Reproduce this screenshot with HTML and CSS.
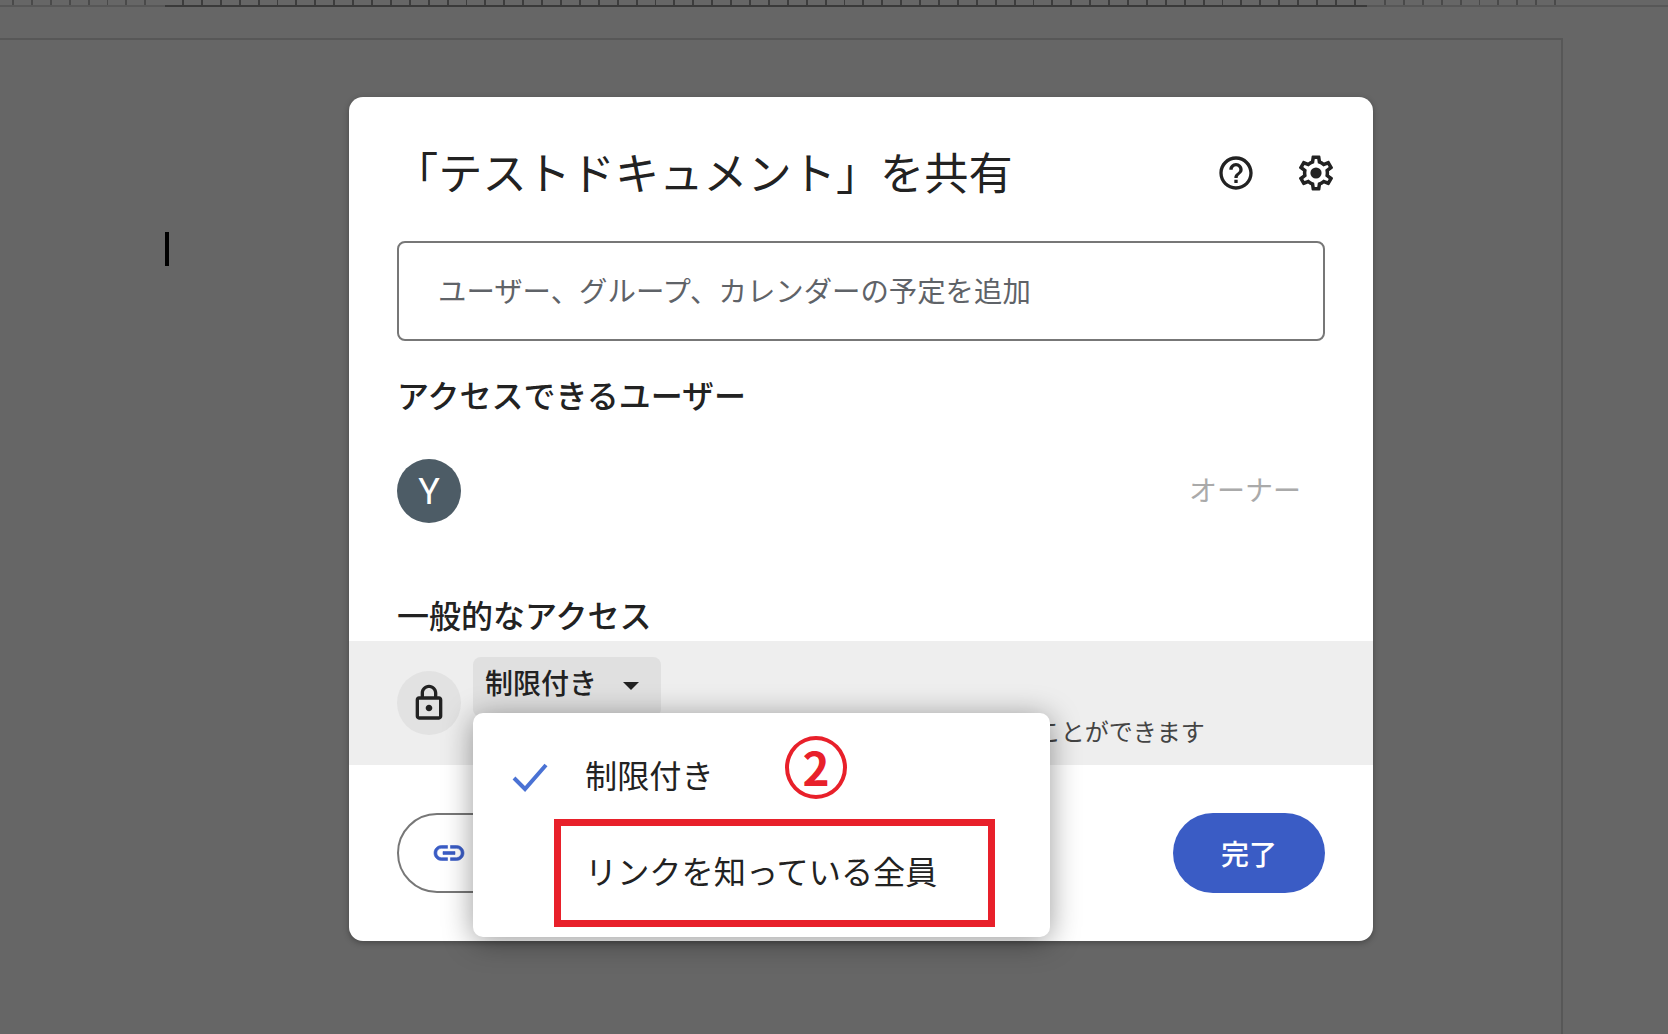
FILE: index.html
```html
<!DOCTYPE html>
<html lang="ja">
<head>
<meta charset="UTF-8">
<title>共有</title>
<link rel="stylesheet" href="styles.css">
</head>
<body>

<div class="ruler">
  <div class="ruler-side ruler-left"></div>
  <div class="ruler-main"></div>
  <div class="ruler-side ruler-right"></div>
</div>

<div class="page">
  <div class="caret"></div>
</div>

<div class="dialog">

  <div class="header">
    <h1 class="title">「テストドキュメント」を共有</h1>
    <svg class="head-icon" viewBox="0 0 24 24"><path d="M11 18h2v-2h-2v2zm1-16C6.48 2 2 6.48 2 12s4.48 10 10 10 10-4.48 10-10S17.52 2 12 2zm0 18c-4.41 0-8-3.59-8-8s3.59-8 8-8 8 3.59 8 8-3.59 8-8 8zm0-14c-2.21 0-4 1.79-4 4h2c0-1.1.9-2 2-2s2 .9 2 2c0 2-3 1.75-3 5h2c0-2.25 3-2.5 3-5 0-2.21-1.79-4-4-4z"/></svg>
    <svg class="head-icon gear" viewBox="0 0 24 24"><path d="M19.43 12.98c.04-.32.07-.64.07-.98s-.03-.66-.07-.98l2.11-1.65c.19-.15.24-.42.12-.64l-2-3.46c-.12-.22-.39-.3-.61-.22l-2.49 1c-.52-.4-1.08-.73-1.69-.98l-.38-2.65C14.46 2.18 14.25 2 14 2h-4c-.25 0-.46.18-.49.42l-.38 2.65c-.61.25-1.17.59-1.69.98l-2.49-1c-.23-.09-.49 0-.61.22l-2 3.46c-.13.22-.07.49.12.64l2.11 1.65c-.04.32-.07.65-.07.98s.03.66.07.98l-2.11 1.65c-.19.15-.24.42-.12.64l2 3.46c.12.22.39.3.61.22l2.49-1c.52.4 1.08.73 1.69.98l.38 2.65c.03.24.24.42.49.42h4c.25 0 .46-.18.49-.42l.38-2.65c.61-.25 1.17-.59 1.69-.98l2.49 1c.23.09.49 0 .61-.22l2-3.46c.12-.22.07-.49-.12-.64l-2.11-1.65zM17.45 11.27c.04.31.05.52.05.73s-.02.43-.05.73l-.14 1.13.89.7 1.08.84-.7 1.21-1.27-.51-1.04-.42-.9.68c-.43.32-.84.56-1.25.73l-1.06.43-.16 1.13-.2 1.35h-1.4l-.19-1.35-.16-1.13-1.06-.43c-.43-.18-.83-.41-1.23-.71l-.91-.7-1.06.43-1.27.51-.7-1.21 1.08-.84.89-.7-.14-1.13c-.03-.31-.05-.54-.05-.74s.02-.43.05-.73l.14-1.13-.89-.7-1.08-.84.7-1.21 1.27.51 1.04.42.9-.68c.43-.32.84-.56 1.25-.73l1.06-.43.16-1.13.2-1.35h1.39l.19 1.35.16 1.13 1.06.43c.43.18.83.41 1.23.71l.91.7 1.06-.43 1.27-.51.7 1.21-1.07.85-.89.7.14 1.13z"/><circle cx="12" cy="12" r="3.2"/></svg>
  </div>

  <div class="add-box">ユーザー、グループ、カレンダーの予定を追加</div>

  <h2 class="section-title">アクセスできるユーザー</h2>

  <div class="owner-row">
    <div class="avatar">Y</div>
    <div class="owner-label">オーナー</div>
  </div>

  <h2 class="section-title general-title">一般的なアクセス</h2>

  <div class="access-band">
    <div class="lock-circle">
      <svg viewBox="0 0 24 24"><path d="M12 17c1.1 0 2-.9 2-2s-.9-2-2-2-2 .9-2 2 .9 2 2 2zm6-9h-1V6c0-2.76-2.24-5-5-5S7 3.24 7 6v2H6c-1.1 0-2 .9-2 2v10c0 1.1.9 2 2 2h12c1.1 0 2-.9 2-2V10c0-1.1-.9-2-2-2zM9 6c0-1.66 1.34-3 3-3s3 1.34 3 3v2H9V6zm9 14H6V10h12v10z"/></svg>
    </div>
    <div class="access-info">
      <div class="access-select"><span class="select-text">制限付き</span><span class="arrow"></span></div>
      <div class="access-desc">アクセス権のあるユーザーのみが、リンクから開くことができます</div>
    </div>
  </div>

  <div class="footer">
    <div class="copy-btn">
      <svg viewBox="0 0 24 24"><path d="M3.9 12c0-1.71 1.39-3.1 3.1-3.1h4V7H7c-2.76 0-5 2.24-5 5s2.24 5 5 5h4v-1.9H7c-1.71 0-3.1-1.39-3.1-3.1zM8 13h8v-2H8v2zm9-6h-4v1.9h4c1.71 0 3.1 1.39 3.1 3.1s-1.39 3.1-3.1 3.1h-4V17h4c2.76 0 5-2.24 5-5s-2.24-5-5-5z"/></svg>
    </div>
    <div class="done-btn">完了</div>
  </div>

  <!-- popup over the band and footer -->
  <div class="menu">
    <div class="menu-item item-first">
      <svg class="check" viewBox="0 0 36 30"><path d="M2 16l11 11L34 3" fill="none" stroke="#4a72d4" stroke-width="4"/></svg>
      制限付き
    </div>
    <div class="menu-item">リンクを知っている全員</div>
    <div class="mark-box"></div>
    <div class="mark-num">2</div>
  </div>

</div>

</body>
</html>
```

FILE: styles.css
```css
*{
    box-sizing:border-box;
}

html,body{
    height:100%;
}

body{
    margin:0;
    background:#666;
    overflow:hidden;
    font-family:"Noto Sans CJK JP","Noto Sans",sans-serif;
    color:#222;
}

/* ruler */
.ruler{
    display:flex;
    height:7px;
}

.ruler-side,.ruler-main{
    border-bottom:2px solid #575757;
    background:repeating-linear-gradient(90deg,transparent 0,transparent 17px,#4a4a4a 17px,#4a4a4a 18.9px);
}

.ruler-left{
    width:165px;
    background-position:-5px 0;
}

.ruler-main{
    width:1202px;
    border-bottom-color:#3a3a3a;
    background:repeating-linear-gradient(90deg,transparent 0,transparent 17px,#3d3d3d 17px,#3d3d3d 18.9px);
}

.ruler-right{
    flex:1;
    background:linear-gradient(90deg,transparent 195px,#666 195px),repeating-linear-gradient(90deg,transparent 0,transparent 17px,#4a4a4a 17px,#4a4a4a 18.9px);
}

/* document behind the dialog */
.page{
    width:1563px;
    height:1000px;
    margin-top:31px;
    padding:192px 0 0 165px;
    border-top:2px solid #575757;
    border-right:2px solid #575757;
}

.caret{
    width:4px;
    height:34px;
    background:#000;
}

/* dialog */
.dialog{
    position:absolute;
    left:349px;
    top:97px;
    width:1024px;
    height:844px;
    padding:0 48px;
    background:#fff;
    border-radius:14px;
    box-shadow:0 2px 6px rgba(0,0,0,0.3);
}

.header{
    display:flex;
    align-items:center;
    height:144px;
    padding-top:7px;
}

.title{
    flex:1;
    margin:-4px 0 0 -3px;
    font-size:44.2px;
    font-weight:400;
    line-height:60px;
    color:#222;
}

.head-icon{
    width:40px;
    height:40px;
    fill:#222;
    margin-left:40px;
}

.gear{
    width:42px;
    height:42px;
    margin-left:39px;
    margin-right:-12px;
}

.add-box{
    height:100px;
    padding-left:39px;
    border:2px solid #777;
    border-radius:8px;
    font-size:28.4px;
    line-height:94px;
    color:#5f6368;
}

.section-title{
    height:106px;
    margin:0;
    font-size:32px;
    font-weight:500;
    line-height:106px;
    color:#222;
}

.owner-row{
    display:flex;
    align-items:center;
    justify-content:space-between;
    height:64px;
    margin-top:12px;
    padding-right:24px;
}

.avatar{
    width:64px;
    height:64px;
    border-radius:50%;
    background:#4d5c66;
    color:#fff;
    font-family:Roboto,sans-serif;
    font-size:36px;
    line-height:67px;
    text-align:center;
}

.owner-label{
    font-size:28px;
    line-height:40px;
    margin-bottom:4px;
    color:#aaa;
}

.general-title{
    height:60px;
    margin-top:58px;
    line-height:66px;
}

.access-band{
    display:flex;
    height:124px;
    margin:0 -48px;
    padding:16px 48px 0;
    gap:12px;
    background:#eee;
}

.lock-circle{
    display:flex;
    align-items:center;
    justify-content:center;
    width:64px;
    height:64px;
    margin-top:14px;
    border-radius:50%;
    background:#e2e2e2;
}

.lock-circle svg{
    width:40px;
    height:40px;
    fill:#222;
}

.access-info{
    flex:1;
}

.access-select{
    display:flex;
    align-items:center;
    width:188px;
    height:60px;
    padding:0 12px;
    border-radius:8px;
    background:#e0e0e0;
    font-size:28px;
    color:#222;
}

.select-text{
    font-weight:500;
    line-height:50px;
    margin-bottom:10px;
}

.arrow{
    width:0;
    height:0;
    margin:0 0 2px 26px;
    border-left:8px solid transparent;
    border-right:8px solid transparent;
    border-top:8px solid #222;
}

.access-desc{
    margin:-4px 0 0 14px;
    font-size:24px;
    line-height:36px;
    color:#444;
    white-space:nowrap;
}

.footer{
    display:flex;
    justify-content:space-between;
    margin-top:48px;
}

.copy-btn{
    display:flex;
    align-items:center;
    height:80px;
    width:340px;
    padding-left:32px;
    border:2px solid #777;
    border-radius:40px;
}

.copy-btn svg{
    width:36px;
    height:36px;
    fill:#3a5cc5;
    stroke:#3a5cc5;
    stroke-width:0.4;
    flex:none;
}

.done-btn{
    width:152px;
    height:80px;
    border-radius:40px;
    background:#3a5cc5;
    color:#fff;
    font-size:28px;
    font-weight:500;
    line-height:80px;
    text-align:center;
}

/* dropdown menu */
.menu{
    position:absolute;
    left:124px;
    top:616px;
    width:577px;
    height:224px;
    padding-left:112px;
    background:#fff;
    border-radius:10px;
    box-shadow:0 4px 30px rgba(0,0,0,0.4);
}

.menu-item{
    position:relative;
    height:95px;
    font-size:32.2px;
    line-height:93px;
    color:#222;
}

.item-first{
    height:111px;
    padding-top:14px;
    line-height:95px;
}

.check{
    position:absolute;
    left:-73px;
    top:49px;
    width:36px;
    height:30px;
}

.mark-box{
    position:absolute;
    left:81px;
    top:106px;
    width:441px;
    height:108px;
    border:7px solid #e8202a;
}

.mark-num{
    position:absolute;
    left:312px;
    top:23px;
    width:62px;
    height:63px;
    border:4px solid #e8202a;
    border-radius:50%;
    color:#e8202a;
    font-size:46px;
    font-weight:700;
    line-height:52px;
    text-align:center;
}
```
